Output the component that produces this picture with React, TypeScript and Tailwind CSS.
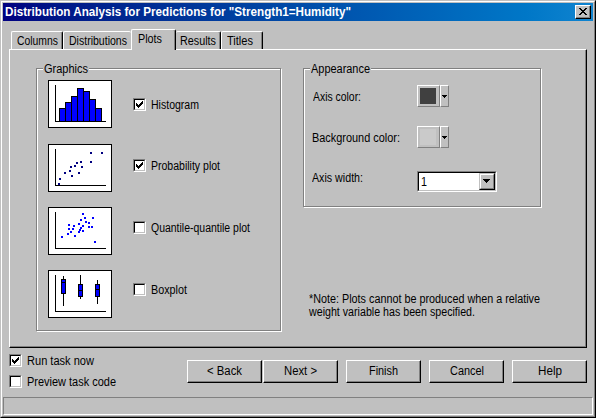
import { useLayoutEffect, useRef, type ReactNode } from "react";

/** One line of text squeezed horizontally to the given advance width. */
function Text({ w, children }: { w: number; children: string }) {
  const ref = useRef<HTMLSpanElement>(null);
  useLayoutEffect(() => {
    const el = ref.current;
    if (!el) return;
    el.style.transform = "none";
    const natural = el.getBoundingClientRect().width;
    el.style.transform = `scaleX(${w / natural})`;
  }, [w, children]);
  return (
    <span className="block h-[14px] shrink-0 leading-[14px]" style={{ width: w }}>
      <span ref={ref} className="inline-block origin-left whitespace-pre align-top">
        {children}
      </span>
    </span>
  );
}

function CheckBox({ checked }: { checked?: boolean }) {
  return (
    <span className="block size-[13px] shrink-0 border border-t-[#808080] border-l-[#808080] border-r-white border-b-white">
      <span className="block size-[11px] border border-t-black border-l-black border-r-[#c0c0c0] border-b-[#c0c0c0] bg-white">
        {checked && (
          <svg className="block size-[9px]" viewBox="0 0 9 9" shapeRendering="crispEdges">
            <path d="M1 3h1v3h-1zM2 4h1v3h-1zM3 5h1v3h-1zM4 4h1v3h-1zM5 3h1v3h-1zM6 2h1v3h-1zM7 1h1v3h-1z" />
          </svg>
        )}
      </span>
    </span>
  );
}

function Check({ label, w, checked, className = "" }: { label: string; w: number; checked?: boolean; className?: string }) {
  return (
    <label className={`flex h-[13px] gap-[5px] ${className}`}>
      <CheckBox checked={checked} />
      <Text w={w}>{label}</Text>
    </label>
  );
}

function Tab({ label, w, className = "" }: { label: string; w: number; className?: string }) {
  return (
    <div className={`flex rounded-t-[2px] border-t border-t-white bg-[#c0c0c0] pt-[2px] ${className}`}>
      <Text w={w}>{label}</Text>
    </div>
  );
}

const edgeLeft = "border-l border-l-white";
const edgeRight = "border-r border-r-black shadow-[inset_-1px_0_0_#808080]";

function Group({ label, w, className, children }: { label: string; w: number; className: string; children: ReactNode }) {
  return (
    <section className={`border border-[#808080] shadow-[1px_1px_0_#fff,inset_1px_1px_0_#fff] ${className}`}>
      <div className="-mt-[7px] ml-[6px] flex w-fit bg-[#c0c0c0] px-[1px]">
        <Text w={w}>{label}</Text>
      </div>
      {children}
    </section>
  );
}

function Chart({ children }: { children: ReactNode }) {
  return (
    <svg className="block h-12 w-16 shrink-0 border border-black bg-white" viewBox="1 1 62 46" shapeRendering="crispEdges">
      <path d="M7 5h1v36h50v1h-51z" />
      {children}
    </svg>
  );
}

const barTops = [28, 22, 16, 8, 11, 19, 28];
const probability = [
  [10, 39], [11, 34], [16, 28], [21, 26], [22, 22], [26, 21], [28, 18], [32, 17],
  [33, 22], [30, 28], [23, 31], [42, 17], [42, 8], [53, 8],
];
const quantile = [
  [13, 29], [19, 26], [20, 17], [20, 21], [22, 24], [24, 21], [25, 18], [26, 28],
  [30, 16], [30, 24], [31, 22], [32, 20], [32, 12], [34, 6], [34, 18], [34, 23],
  [36, 10], [37, 14], [40, 15], [40, 19], [43, 19], [44, 10], [46, 34],
];
const boxes = [
  { x: 13, lo: 6, hi: 36, top: 9, bottom: 24, mid: 12 },
  { x: 30, lo: 5, hi: 29, top: 14, bottom: 27, mid: 20 },
  { x: 47, lo: 10, hi: 34, top: 14, bottom: 27, mid: 19 },
];

function Dots({ points, fill }: { points: number[][]; fill: string }) {
  return (
    <>
      {points.map(([x, y]) => (
        <rect key={`${x}-${y}`} x={x} y={y} width="2" height="2" fill={fill} />
      ))}
    </>
  );
}

function ColorButton({ swatch }: { swatch: string }) {
  const raised = "border border-t-white border-l-white border-r-[#808080] border-b-[#808080]";
  return (
    <div className="flex h-[22px]">
      <div className={`w-[23px] p-[2px] ${raised}`}>
        <div className={`size-4 ${swatch}`} />
      </div>
      <div className={`w-[9px] pt-[9px] pl-[1px] ${raised}`}>
        <svg className="block h-[3px] w-[5px]" viewBox="0 0 5 3" shapeRendering="crispEdges">
          <path d="M0 0h5v1h-1v1h-1v1h-1v-1h-1v-1h-1z" />
        </svg>
      </div>
    </div>
  );
}

function Button({ label, w, className = "" }: { label: string; w: number; className?: string }) {
  return (
    <button
      className={`flex h-[23px] w-[75px] justify-center border border-t-white border-l-white border-r-black border-b-black pt-[3px] shadow-[inset_-1px_-1px_0_#808080] ${className}`}
    >
      <Text w={w}>{label}</Text>
    </button>
  );
}

export default function App() {
  return (
    <div className="h-[418px] w-[596px] border border-t-[#c0c0c0] border-l-[#c0c0c0] border-r-black border-b-black bg-[#c0c0c0] font-['Liberation_Sans',Arial,sans-serif] text-[12px] text-black">
      <div className="h-[416px] border border-t-white border-l-white border-r-[#808080] border-b-[#808080] p-px">
        <header className="flex h-[18px] items-start justify-between bg-linear-to-r from-[#000080] to-[#1084d0] pt-[2px] pr-[2px] pl-[2px] font-bold text-white">
          <Text w={346}>{'Distribution Analysis for Predictions for "Strength1=Humidity"'}</Text>
          <button className="flex h-[14px] w-4 items-start border border-t-white border-l-white border-r-black border-b-black bg-[#c0c0c0] pt-[2px] pl-[3px] text-black shadow-[inset_-1px_-1px_0_#808080]">
            <svg className="block h-[7px] w-2 shrink-0" viewBox="0 0 8 7" shapeRendering="crispEdges">
              <path d="M0 0h2v1h1v1h2v-1h1v-1h2v1h-1v1h-1v1h-1v1h1v1h1v1h1v1h-2v-1h-1v-1h-2v1h-1v1h-2v-1h1v-1h1v-1h1v-1h-1v-1h-1v-1h-1z" />
            </svg>
          </button>
        </header>

        <nav className="mt-2 flex h-5 items-end pl-2">
          <Tab label="Columns" w={41} className={`h-[18px] w-[52px] pl-[5px] ${edgeLeft} ${edgeRight}`} />
          <Tab label="Distributions" w={58} className={`h-[18px] w-[68px] pl-[5px] ${edgeLeft}`} />
          <Tab label="Plots" w={24} className={`z-10 -mb-px h-[21px] w-[45px] pl-[6px] ${edgeLeft} ${edgeRight}`} />
          <Tab label="Results" w={36} className={`h-[18px] w-[45px] pl-[4px] ${edgeRight}`} />
          <Tab label="Titles" w={26} className={`h-[18px] w-[42px] pl-[5px] ${edgeLeft} ${edgeRight}`} />
        </nav>

        <main className="ml-[6px] flex h-[299px] w-[578px] items-start gap-[22px] border border-t-white border-l-white border-r-black border-b-black pt-[18px] pl-[26px] shadow-[inset_-1px_-1px_0_#808080]">
          <Group label="Graphics" w={44} className="h-[263px] w-[245px]">
            <div className="mt-1 flex flex-col gap-[15px] pl-[11px]">
              <div className="mb-px flex gap-[21px]">
                <Chart>
                  {barTops.map((top, i) => (
                    <rect key={i} x={11.5 + i * 6} y={top + 0.5} width="6" height={41 - top} fill="#0000ff" stroke="#000" />
                  ))}
                </Chart>
                <Check label="Histogram" w={48} checked className="mt-[18px]" />
              </div>
              <div className="flex gap-[21px]">
                <Chart>
                  <Dots points={probability} fill="#000080" />
                </Chart>
                <Check label="Probability plot" w={69} checked className="mt-[15px]" />
              </div>
              <div className="flex gap-[21px]">
                <Chart>
                  <Dots points={quantile} fill="#0000ff" />
                </Chart>
                <Check label="Quantile-quantile plot" w={99} className="mt-[14px]" />
              </div>
              <div className="flex gap-[21px]">
                <Chart>
                  {boxes.map((b) => (
                    <g key={b.x}>
                      <rect x={b.x + 2} y={b.lo} width="1" height={b.hi - b.lo} />
                      <rect x={b.x} y={b.top} width="5" height={b.bottom - b.top} />
                      <rect x={b.x + 1} y={b.top + 1} width="3" height={b.bottom - b.top - 2} fill="#0000ff" />
                      <rect x={b.x} y={b.mid} width="5" height="1" />
                    </g>
                  ))}
                </Chart>
                <Check label="Boxplot" w={36} className="mt-[13px]" />
              </div>
            </div>
          </Group>

          <div>
            <Group label="Appearance" w={59} className="h-[139px] w-[238px]">
              <div className="mt-[9px] flex pl-[9px]">
                <div className="w-[104px] pt-[5px]">
                  <Text w={48}>Axis color:</Text>
                </div>
                <ColorButton swatch="bg-[#404040]" />
              </div>
              <div className="mt-[19px] flex pl-2">
                <div className="w-[105px] pt-[5px]">
                  <Text w={88}>Background color:</Text>
                </div>
                <ColorButton swatch="bg-[#cacaca]" />
              </div>
              <div className="mt-[23px] flex pl-2">
                <div className="w-[105px]">
                  <Text w={51}>Axis width:</Text>
                </div>
                <div className="h-[21px] w-20 border border-t-[#808080] border-l-[#808080] border-r-white border-b-white">
                  <div className="flex h-[19px] justify-between border border-t-black border-l-black border-r-[#c0c0c0] border-b-[#c0c0c0] bg-white">
                    <div className="pt-[2px] pl-[2px]">
                      <Text w={6}>1</Text>
                    </div>
                    <div className="h-[17px] w-4 border border-t-[#c0c0c0] border-l-[#c0c0c0] border-r-black border-b-black bg-[#c0c0c0]">
                      <div className="h-[15px] border border-t-white border-l-white border-r-[#808080] border-b-[#808080] pt-1 pl-[2px]">
                        <svg className="block h-1 w-[7px]" viewBox="0 0 7 4" shapeRendering="crispEdges">
                          <path d="M0 0h7v1h-1v1h-1v1h-1v1h-1v-1h-1v-1h-1v-1h-1z" />
                        </svg>
                      </div>
                    </div>
                  </div>
                </div>
              </div>
            </Group>
            <div className="mt-[85px] flex flex-col pl-[6px]">
              <div className="h-[13px]">
                <Text w={231}>*Note: Plots cannot be produced when a relative</Text>
              </div>
              <Text w={166}>weight variable has been specified.</Text>
            </div>
          </div>
        </main>

        <div className="mt-[6px] flex h-[43px] pl-[6px]">
          <div className="flex w-[178px] flex-col gap-2">
            <Check label="Run task now" w={67} checked />
            <Check label="Preview task code" w={89} />
          </div>
          <div className="flex pt-[6px]">
            <Button label="< Back" w={35} />
            <Button label="Next >" w={33} className="ml-px" />
            <Button label="Finish" w={29} className="ml-2" />
            <Button label="Cancel" w={34} className="ml-2" />
            <Button label="Help" w={24} className="ml-2" />
          </div>
        </div>

        <footer className="h-[18px] border border-t-[#808080] border-l-[#808080] border-r-white border-b-white" />
      </div>
    </div>
  );
}
